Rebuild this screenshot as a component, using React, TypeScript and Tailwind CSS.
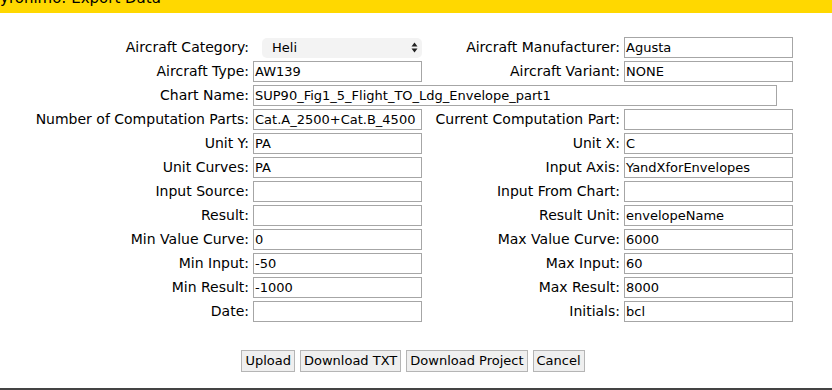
import React from "react";

const font = { fontFamily: '"DejaVu Sans", Verdana, sans-serif' };

function Field({ value, wide }: { value: string; wide?: boolean }) {
  return (
    <div
      className={
        "h-[21px] border border-[#a6a6a6] bg-white px-[1px] flex items-center text-[13px] text-black whitespace-nowrap overflow-hidden " +
        (wide ? "w-[524px] col-span-3" : "w-[169px]")
      }
    >
      {value}
    </div>
  );
}

function Label({ text }: { text: string }) {
  return (
    <div className="h-[21px] flex items-center justify-end text-[14px] text-black whitespace-nowrap">
      {text}
    </div>
  );
}

function Select() {
  return (
    <div className="h-[21px] flex items-center">
      <div className="ml-[9px] w-[160px] h-[20px] rounded-[5px] bg-[#f3f3f3] flex items-center justify-between pl-[10px] pr-[4px] text-[13px] text-black">
        <span>Heli</span>
        <svg width="7" height="11" viewBox="0 0 7 11">
          <polygon points="3.5,0.5 6.5,4.5 0.5,4.5" fill="#222" />
          <polygon points="3.5,10.5 6.5,6.5 0.5,6.5" fill="#222" />
        </svg>
      </div>
    </div>
  );
}

function Button({ text }: { text: string }) {
  return (
    <div className="h-[22px] px-[3px] border border-[#b5b5b5] bg-[#efefef] flex items-center text-[13px] text-black">
      {text}
    </div>
  );
}

const rows: [string, string, string, string][] = [
  ["Number of Computation Parts:", "Cat.A_2500+Cat.B_4500", "Current Computation Part:", ""],
  ["Unit Y:", "PA", "Unit X:", "C"],
  ["Unit Curves:", "PA", "Input Axis:", "YandXforEnvelopes"],
  ["Input Source:", "", "Input From Chart:", ""],
  ["Result:", "", "Result Unit:", "envelopeName"],
  ["Min Value Curve:", "0", "Max Value Curve:", "6000"],
  ["Min Input:", "-50", "Max Input:", "60"],
  ["Min Result:", "-1000", "Max Result:", "8000"],
  ["Date:", "", "Initials:", "bcl"],
];

export default function App() {
  return (
    <div className="w-[832px] h-[390px] bg-white flex flex-col overflow-hidden" style={font}>
      <div className="h-[13px] bg-[#ffd800] overflow-hidden shrink-0">
        <div className="text-[15px] leading-[18px] mt-[-11px] text-black whitespace-nowrap">yronimo: Export Data</div>
      </div>
      <div className="pt-[24px] pl-[33px]">
        <div className="grid grid-cols-[216px_169px_194px_169px] gap-x-[4px] gap-y-[3px]">
          <Label text="Aircraft Category:" />
          <Select />
          <Label text="Aircraft Manufacturer:" />
          <Field value="Agusta" />
          <Label text="Aircraft Type:" />
          <Field value="AW139" />
          <Label text="Aircraft Variant:" />
          <Field value="NONE" />
          <Label text="Chart Name:" />
          <Field value="SUP90_Fig1_5_Flight_TO_Ldg_Envelope_part1" wide />
          {rows.map((r) => (
            <React.Fragment key={r[0]}>
              <Label text={r[0]} />
              <Field value={r[1]} />
              <Label text={r[2]} />
              <Field value={r[3]} />
            </React.Fragment>
          ))}
        </div>
        <div className="w-[760px] flex justify-center gap-[5px] mt-[28px]">
          <Button text="Upload" />
          <Button text="Download TXT" />
          <Button text="Download Project" />
          <Button text="Cancel" />
        </div>
      </div>
      <div className="mt-auto h-[2px] bg-[#444444] shrink-0" />
    </div>
  );
}
